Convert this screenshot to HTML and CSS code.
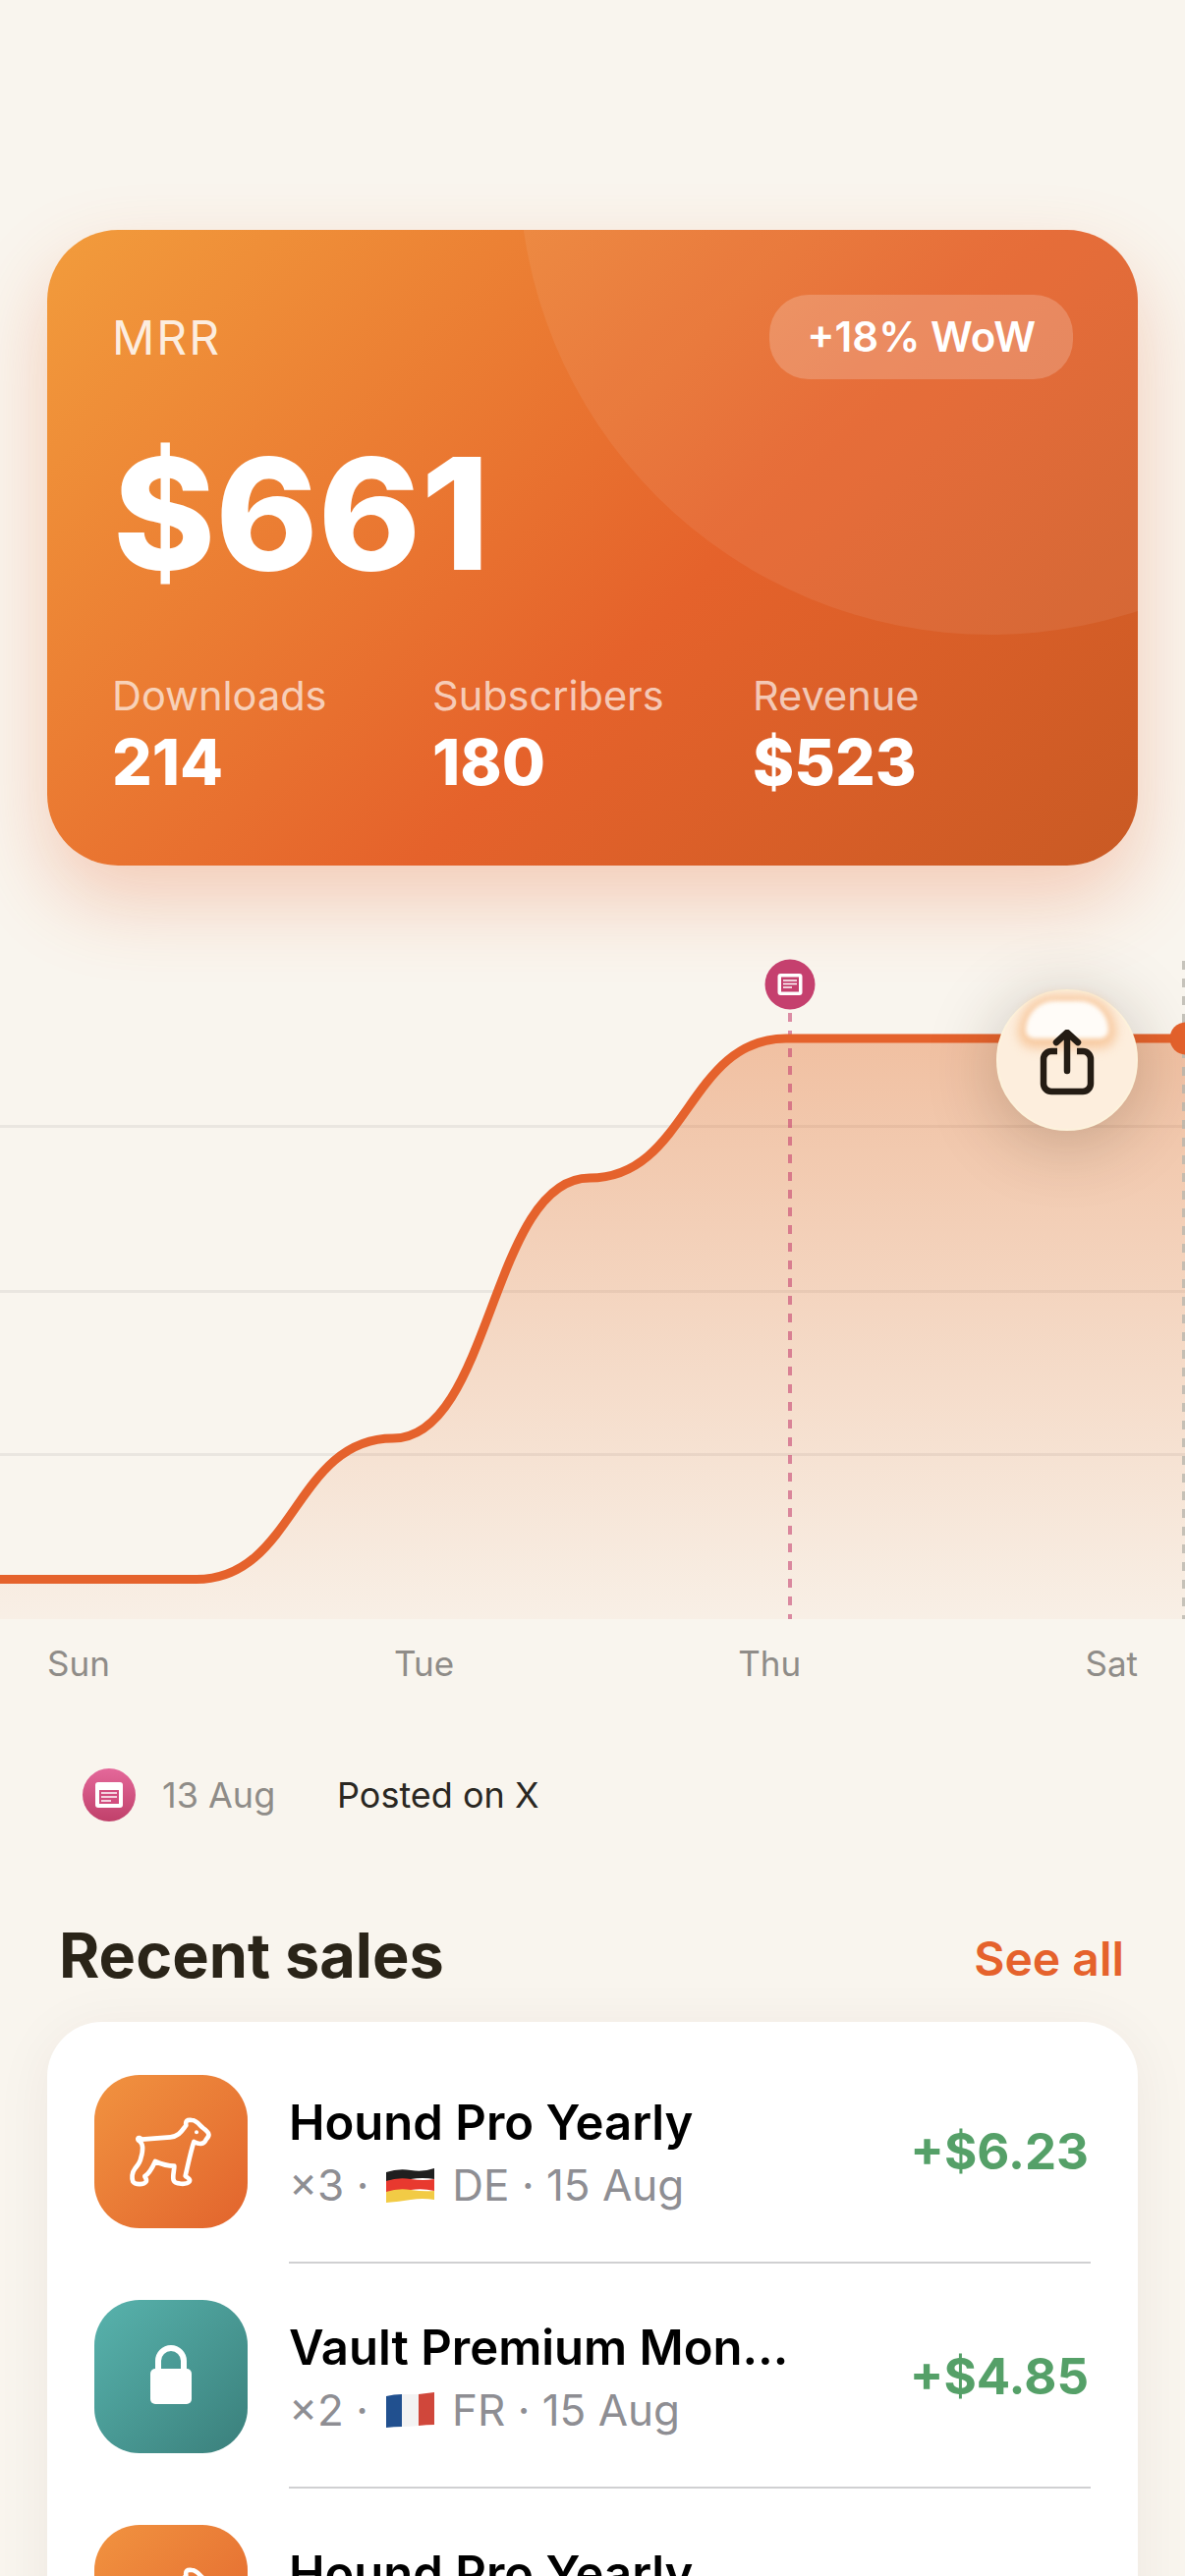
FILE: index.html
```html
<!DOCTYPE html>
<html lang="en">

<head>
    <meta charset="UTF-8">
    <meta name="viewport" content="width=device-width, initial-scale=1.0">
    <title>Dashboard</title>
    <link rel="stylesheet" href="styles.css">
</head>

<body>

    <div class="screen">

        <div class="hero">
            <div class="hero-circle"></div>
            <div class="hero-top">
                <span class="hero-label">MRR</span>
                <span class="hero-badge">+18% WoW</span>
            </div>
            <div class="hero-value">$661</div>
            <div class="hero-stats">
                <div class="stat">
                    <div class="stat-label">Downloads</div>
                    <div class="stat-value">214</div>
                </div>
                <div class="stat">
                    <div class="stat-label">Subscribers</div>
                    <div class="stat-value">180</div>
                </div>
                <div class="stat">
                    <div class="stat-label">Revenue</div>
                    <div class="stat-value">$523</div>
                </div>
            </div>
        </div>

        <div class="chart">
            <svg class="chart-svg" viewBox="0 0 1206 690" width="1206" height="690">
                <defs>
                    <linearGradient id="areaFill" x1="0" y1="0" x2="0" y2="1">
                        <stop offset="0" stop-color="#e2661f" stop-opacity="0.37" />
                        <stop offset="1" stop-color="#e2661f" stop-opacity="0.04" />
                    </linearGradient>
                </defs>
                <!-- grid -->
                <rect x="0" y="185" width="1206" height="3" fill="#000" fill-opacity="0.06" />
                <rect x="0" y="353" width="1206" height="3" fill="#000" fill-opacity="0.06" />
                <rect x="0" y="519" width="1206" height="3" fill="#000" fill-opacity="0.06" />
                <!-- area and line, y is offset by 960 from the page -->
                <path fill="url(#areaFill)" d="M0 647.5 L200 647.5 C300 647.5 300 504 400 504 C500 504 500 239 600 239 C700 239 700 97 800 97 L1206 97 L1206 688 L0 688 Z" />
                <line x1="804" y1="71" x2="804" y2="688" stroke="#c5406e" stroke-opacity="0.58" stroke-width="4" stroke-dasharray="9 9" />
                <line x1="1205" y1="18" x2="1205" y2="688" stroke="#b9b6ae" stroke-opacity="0.8" stroke-width="4" stroke-dasharray="9 9" />
                <path fill="none" stroke="#e5622c" stroke-width="9" d="M0 647.5 L200 647.5 C300 647.5 300 504 400 504 C500 504 500 239 600 239 C700 239 700 97 800 97 L1206 97" />
                <circle cx="1207" cy="97" r="16.5" fill="#e5622c" />
                <!-- note pin -->
                <circle cx="804" cy="42" r="25.5" fill="#c5406e" />
                <rect x="791.5" y="31" width="25" height="22" rx="3" fill="#fff" />
                <rect x="795" y="34.5" width="18" height="15" fill="#c5406e" />
                <path d="M797 38h14M797 41.5h14M797 45h9" stroke="#fff" stroke-width="1.4" fill="none" />
            </svg>
            <button class="share-btn">
                <span class="share-gloss"></span>
                <svg class="share-icon" viewBox="0 0 60 70" width="60" height="70">
                    <path d="M20 22h-6a8 8 0 0 0-8 8v25a8 8 0 0 0 8 8h32a8 8 0 0 0 8-8v-25a8 8 0 0 0-8-8h-6" fill="none" stroke="#241c14" stroke-width="6.5" />
                    <path d="M30 42V4M19 13L30 3l11 10" fill="none" stroke="#241c14" stroke-width="6.5" stroke-linecap="round" stroke-linejoin="round" />
                </svg>
            </button>
        </div>

        <div class="axis">
            <span>Sun</span>
            <span>Tue</span>
            <span>Thu</span>
            <span>Sat</span>
        </div>

        <div class="note">
            <span class="note-icon">
                <svg viewBox="0 0 28 26" width="28" height="26">
                    <rect x="0" y="0" width="28" height="26" rx="3" fill="#fff" />
                    <rect x="4" y="8" width="20" height="14" fill="#d24d7e" />
                    <path d="M6 11h16M6 15h16M6 19h10" stroke="#fff" stroke-width="1.6" fill="none" />
                </svg>
            </span>
            <span class="note-date">13 Aug</span>
            <span class="note-text">Posted on X</span>
        </div>

        <div class="section-head">
            <h2>Recent sales</h2>
            <span class="see-all">See all</span>
        </div>

        <div class="sales">

            <div class="sale">
                <div class="sale-icon orange">
                    <svg class="dog" viewBox="18 36 468 468" width="156" height="156">
                        <path d="M162 233C152 222 146 232 156 238C168 246 166 270 160 290C158 304 150 312 142 322C132 334 132 352 136 362C142 372 170 372 176 362C180 354 172 350 172 345C186 338 194 322 204 300C222 308 240 314 262 314C262 330 256 344 260 358C264 370 300 372 308 362C314 352 300 350 296 344C304 310 312 270 322 240C338 248 352 250 360 232C374 218 366 210 350 198C340 190 330 174 316 174C300 172 296 176 298 190C284 208 276 224 250 226C226 228 196 230 172 232Z" fill="none" stroke="#fff" stroke-width="14" stroke-linejoin="round" />
                        <circle cx="330" cy="211" r="6" fill="#fff" />
                    </svg>
                </div>
                <div class="sale-body">
                    <div class="sale-info">
                        <div class="sale-name">Hound Pro Yearly</div>
                        <div class="sale-meta">
                            <span>×3 ·</span>
                            <svg class="flag" viewBox="0 0 49 36" width="49" height="36">
                                <path d="M0 5Q12 1 25 3T49 1V12Q37 10 25 12T0 14Z" fill="#1f1f1f" />
                                <path d="M0 14Q12 10 25 12T49 12V24Q37 21 25 23T0 25Z" fill="#e8392f" />
                                <path d="M0 25Q12 21 25 23T49 24V33Q37 31 25 33T0 36Z" fill="#f2cb45" />
                            </svg>
                            <span>DE · 15 Aug</span>
                        </div>
                    </div>
                    <div class="sale-amount">+$6.23</div>
                </div>
            </div>

            <div class="sale">
                <div class="sale-icon teal">
                    <svg viewBox="0 0 48 64" width="48" height="64">
                        <path d="M11 30V16a13 13 0 0 1 26 0v14" fill="none" stroke="#fff" stroke-width="6" />
                        <rect x="3" y="24" width="42" height="36" rx="5" fill="#fff" />
                    </svg>
                </div>
                <div class="sale-body">
                    <div class="sale-info">
                        <div class="sale-name">Vault Premium Monthly</div>
                        <div class="sale-meta">
                            <span>×2 ·</span>
                            <svg class="flag" viewBox="0 0 49 36" width="49" height="36">
                                <path d="M0 4Q8 2 16 2V35Q8 35 0 36Z" fill="#21508f" />
                                <path d="M16 2Q24 2 33 2V34Q24 35 16 35Z" fill="#f3f3f3" />
                                <path d="M33 2Q41 1 49 0V33Q41 33 33 34Z" fill="#d0473b" />
                            </svg>
                            <span>FR · 15 Aug</span>
                        </div>
                    </div>
                    <div class="sale-amount">+$4.85</div>
                </div>
            </div>

            <div class="sale">
                <div class="sale-icon orange">
                    <svg class="dog" viewBox="18 36 468 468" width="156" height="156">
                        <path d="M162 233C152 222 146 232 156 238C168 246 166 270 160 290C158 304 150 312 142 322C132 334 132 352 136 362C142 372 170 372 176 362C180 354 172 350 172 345C186 338 194 322 204 300C222 308 240 314 262 314C262 330 256 344 260 358C264 370 300 372 308 362C314 352 300 350 296 344C304 310 312 270 322 240C338 248 352 250 360 232C374 218 366 210 350 198C340 190 330 174 316 174C300 172 296 176 298 190C284 208 276 224 250 226C226 228 196 230 172 232Z" fill="none" stroke="#fff" stroke-width="14" stroke-linejoin="round" />
                        <circle cx="330" cy="211" r="6" fill="#fff" />
                    </svg>
                </div>
                <div class="sale-body">
                    <div class="sale-info">
                        <div class="sale-name">Hound Pro Yearly</div>
                        <div class="sale-meta"></div>
                    </div>
                </div>
            </div>

        </div>
    </div>

</body>

</html>
```

FILE: styles.css
```css
* {
    margin: 0;
    padding: 0;
    box-sizing: border-box;
    font-family: "Inter", sans-serif;
}

body {
    background-color: #f9f5ee;
}

.screen {
    height: 100vh;
    overflow: hidden;
    padding-top: 234px;
}

/* top card */
.hero {
    position: relative;
    height: 647px;
    margin: 0 48px;
    padding: 66px 66px 0;
    border-radius: 72px;
    background: linear-gradient(135deg, #f29c3c 0%, #e5622b 58%, #c95a24 100%);
    box-shadow: 0 36px 80px rgba(229, 98, 44, 0.28);
    color: #fff;
}

.hero-circle {
    position: absolute;
    inset: 0;
    border-radius: 72px;
    overflow: hidden;
}

.hero-circle::after {
    content: "";
    position: absolute;
    left: 480px;
    top: -548px;
    width: 960px;
    height: 960px;
    border-radius: 50%;
    background-color: rgba(255, 255, 255, 0.07);
}

.hero-top {
    position: relative;
    display: flex;
    justify-content: space-between;
    align-items: center;
    height: 86px;
}

.hero-label {
    font-size: 48px;
    letter-spacing: 2px;
    color: rgba(255, 255, 255, 0.85);
}

.hero-badge {
    padding: 0 38px;
    height: 86px;
    line-height: 86px;
    border-radius: 40px;
    font-size: 42px;
    font-weight: 600;
    background-color: rgba(255, 255, 255, 0.2);
}

.hero-value {
    position: relative;
    margin-top: 47px;
    margin-left: 1px;
    font-size: 158px;
    line-height: 180px;
    font-weight: 800;
}

.hero-stats {
    position: relative;
    display: flex;
    margin-top: 65px;
}

.stat {
    width: 326px;
}

.stat-label {
    font-size: 41.5px;
    line-height: 61px;
    color: rgba(255, 255, 255, 0.68);
}

.stat-value {
    font-size: 64px;
    line-height: 74px;
    font-weight: 800;
}

/* chart */
.chart {
    position: relative;
    height: 690px;
    margin-top: 79px;
}

.chart-svg {
    display: block;
}

.share-btn {
    position: absolute;
    left: 1014px;
    top: 47px;
    width: 144px;
    height: 144px;
    border: 2px solid #fdf2dc;
    border-radius: 50%;
    background-color: #fdeedd;
    box-shadow: 0 10px 70px rgba(50, 40, 20, 0.25);
}

.share-gloss {
    position: absolute;
    left: 28px;
    top: 10px;
    width: 84px;
    height: 38px;
    border-radius: 42px 42px 12px 12px;
    background-color: #fffcf8;
    box-shadow: 0 2px 10px 8px rgba(245, 190, 140, 0.75);
    filter: blur(2px);
}

.share-icon {
    position: absolute;
    left: 40px;
    top: 39px;
}

.axis {
    display: flex;
    justify-content: space-between;
    padding: 0 48px;
    margin-top: 23px;
    font-size: 35px;
    line-height: 40px;
    color: #8f8c88;
}

.note {
    display: flex;
    align-items: center;
    margin-top: 87px;
    padding-left: 84px;
    font-size: 36px;
}

.note-icon {
    display: flex;
    align-items: center;
    justify-content: center;
    width: 54px;
    height: 54px;
    border-radius: 50%;
    background: linear-gradient(180deg, #e4689a, #c0406a);
}

.note-date {
    margin-left: 27px;
    width: 178px;
    color: #8f8c88;
}

.note-text {
    color: #2a2722;
}

.section-head {
    display: flex;
    justify-content: space-between;
    align-items: baseline;
    padding: 0 62px 0 60px;
    margin-top: 98px;
}

.section-head h2 {
    font-size: 63px;
    line-height: 76px;
    font-weight: 700;
    color: #2a2418;
}

.see-all {
    position: relative;
    top: -2px;
    font-size: 48px;
    font-weight: 600;
    color: #e5622c;
}

/* sales list */
.sales {
    margin: 30px 48px 0;
    padding: 17px 48px 0;
    border-radius: 56px;
    background-color: #fff;
    box-shadow: 0 8px 60px rgba(60, 40, 20, 0.06);
}

.sale {
    display: flex;
    align-items: center;
}

.sale-icon {
    flex: none;
    display: flex;
    align-items: center;
    justify-content: center;
    width: 156px;
    height: 156px;
    border-radius: 46px;
}

.orange {
    background: linear-gradient(135deg, #f19340, #e2642d);
}

.teal {
    background: linear-gradient(135deg, #58b3ad, #3a7f7b);
}

/* the divider starts at the text, not under the icon */
.sale-body {
    flex: 1;
    min-width: 0;
    display: flex;
    align-items: center;
    height: 229px;
    margin-left: 42px;
    padding-top: 2px;
    border-bottom: 2px solid #d0d0d2;
}

.sale:last-child .sale-body {
    border-bottom: none;
}

.sale-info {
    flex: 1;
    min-width: 0;
}

.sale-name {
    max-width: 510px;
    white-space: nowrap;
    overflow: hidden;
    text-overflow: ellipsis;
    font-size: 49px;
    line-height: 58px;
    font-weight: 600;
    color: #000;
}

.sale-meta {
    display: flex;
    align-items: center;
    gap: 18px;
    min-height: 48px;
    margin-top: 10px;
    white-space: nowrap;
    font-size: 44px;
    line-height: 48px;
    color: #8e8e93;
}

.sale-amount {
    margin-right: 2px;
    font-size: 51px;
    font-weight: 700;
    color: #55a068;
}
```
